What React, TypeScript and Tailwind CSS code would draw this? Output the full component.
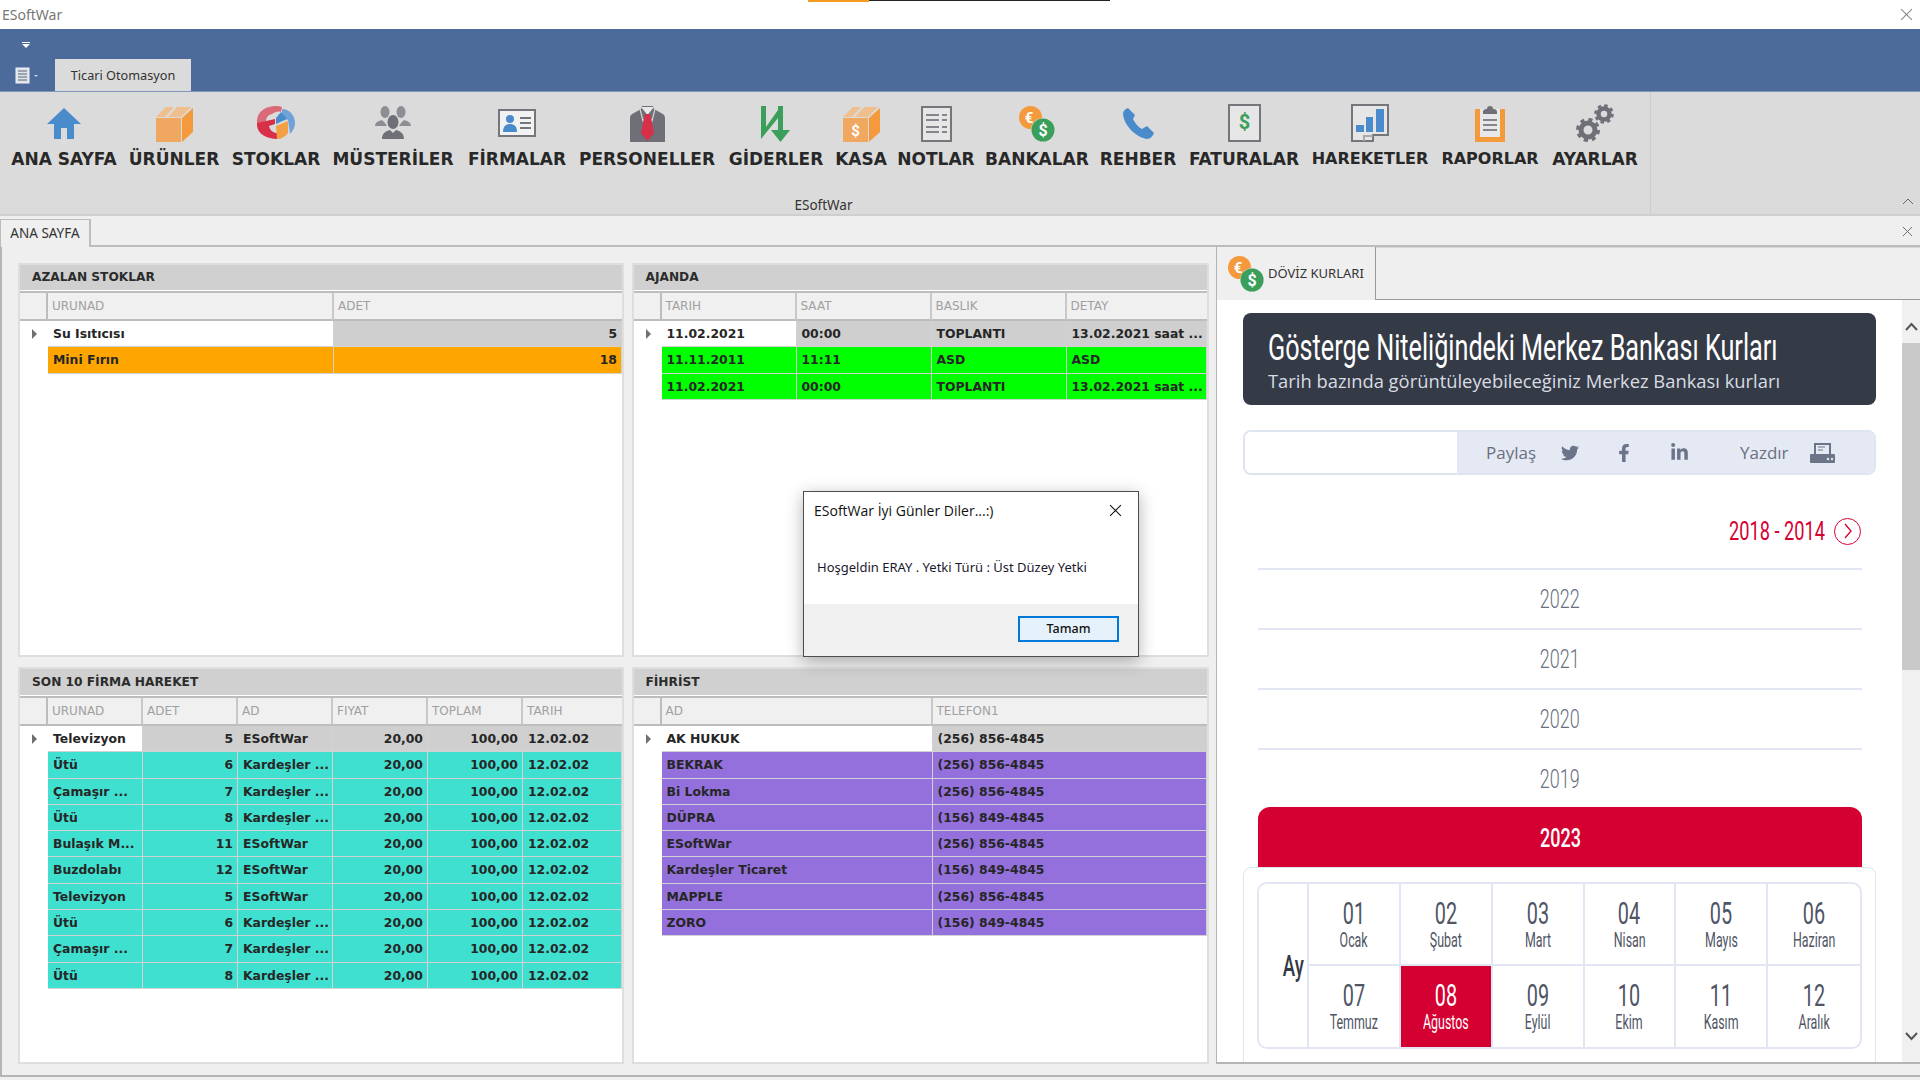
import React from "react";
import { FaTwitter, FaFacebookF, FaLinkedinIn } from "react-icons/fa";

const G = "#6f7077";
const Home = () => (
  <svg width="34" height="31" viewBox="0 0 34 31"><path d="M17 0L34 16H27V31H20V20H14V31H7V16H0Z" fill="#4a8bcb" /></svg>
);
const Box = ({ dollar }: { dollar?: boolean }) => (
  <svg width="37" height="36" viewBox="0 0 37 36">
    <path d="M0 12H25V36H0Z" fill="#f0a860" />
    <path d="M26 12L37 2V26L26 36Z" fill="#f49a3c" />
    <path d="M0 11L10 1H18L9 11Z" fill="#efc08e" />
    <path d="M12 11L21 1H35L25 11Z" fill="#efc08e" />
    {dollar && <text x="12.5" y="30" textAnchor="middle" fill="#fff" fontSize="15" fontWeight="700" fontFamily="Roboto, sans-serif">$</text>}
  </svg>
);
const Chart = () => (
  <svg width="38" height="33" viewBox="0 0 38 33">
    <path d="M0 14C1 5 9 0 19 0C21 0 23 0 25 1L24 6C21 5 18 6 15 8C11 9 9 12 9 15L0 18Z" fill="#db6a78" />
    <path d="M0 15V20C1 28 10 33 20 33V27C17 27 13 25 12 20L18 18V13L9 15L0 17Z" fill="#d9304a" />
    <path d="M19 20L31 15V27C28 31 24 33 20 33Z" fill="#f3a044" />
    <path d="M25 3C32 3 38 9 38 17C38 21 36 25 33 28L31 14L25 11Z" fill="#6fa3d8" />
    <path d="M19 12L24 6L30 13L19 18Z" fill="#4a8bcb" />
  </svg>
);
const People = () => (
  <svg width="36" height="33" viewBox="0 0 36 33">
    <ellipse cx="10" cy="6" rx="4.5" ry="6" fill="#8d8e94" />
    <ellipse cx="26" cy="6" rx="4.5" ry="6" fill="#8d8e94" />
    <path d="M0 20C0 16 4 15 7 14L10 17L12 20H0ZM36 20C36 16 32 15 29 14L26 17L24 20H36Z" fill="#8d8e94" />
    <ellipse cx="18" cy="16" rx="5.5" ry="7" fill={G} />
    <path d="M7 33C7 27 11 25 15 24L18 27L21 24C25 25 29 27 29 33Z" fill={G} />
  </svg>
);
const Card = () => (
  <svg width="38" height="28" viewBox="0 0 38 28">
    <rect x="1" y="1" width="36" height="26" fill="#f2f2f2" stroke="#75767c" strokeWidth="2" />
    <circle cx="12" cy="10" r="4" fill="#4a8bcb" />
    <path d="M5 23C5 17 8 15 12 15C16 15 19 17 19 23Z" fill="#4a8bcb" />
    <path d="M22 9H33M22 14H33M22 19H33" stroke="#75767c" strokeWidth="2" />
  </svg>
);
const Suit = () => (
  <svg width="35" height="36" viewBox="0 0 35 36">
    <path d="M0 12C0 9 2 8 4 7L11 3L12 0H23L24 3L31 7C33 8 35 9 35 12V36H0Z" fill={G} />
    <path d="M11 1H24L17.5 9Z" fill="#e8e8e8" />
    <path d="M10 3L13 15L17 9M25 3L22 15L18 9" stroke="#d5d5d5" strokeWidth="1.2" fill="none" />
    <path d="M15 8H20L21 12L24 27L17.5 35L11 27L14 12Z" fill="#d9304a" />
  </svg>
);
const Gider = () => (
  <svg width="30" height="36" viewBox="0 0 30 36">
    <path d="M0 33V0H5V21L17 4V0H22V24H29L19.5 36L10 24H17V12Z" fill="#3a9f5a" />
  </svg>
);
const Notes = () => (
  <svg width="31" height="36" viewBox="0 0 31 36">
    <rect x="1" y="1" width="29" height="34" fill="#e6e6e6" stroke="#75767c" strokeWidth="2" />
    <path d="M5 9H18M21 9H26M5 14H18M21 14H26M5 21H18M21 21H26M5 26H18M21 26H26" stroke="#85868c" strokeWidth="2" />
  </svg>
);
const Coins = ({ size = 36 }: { size?: number }) => (
  <svg width={size} height={size} viewBox="0 0 36 36">
    <circle cx="11.5" cy="11.5" r="11.5" fill="#f49a3c" />
    <text x="10" y="17" textAnchor="middle" fill="#fff" fontSize="15" fontWeight="700" fontFamily="Roboto, sans-serif">€</text>
    <circle cx="24" cy="24" r="12" fill="#dbdbdb" />
    <circle cx="24" cy="24" r="11.5" fill="#3a9f5a" />
    <text x="24" y="30" textAnchor="middle" fill="#fff" fontSize="16" fontWeight="700" fontFamily="Roboto, sans-serif">$</text>
  </svg>
);
const Phone = () => (
  <svg width="31" height="31" viewBox="0 0 31 31">
    <path d="M5 0C2 1 0 3 0 6C1 17 12 29 24 31C27 31 30 28 31 25L24 18L19 21C15 19 12 15 10 11L12 7Z" fill="#4a8bcb" />
  </svg>
);
const Invoice = () => (
  <svg width="33" height="38" viewBox="0 0 33 38">
    <rect x="1" y="1" width="31" height="36" fill="#e6e6e6" stroke="#75767c" strokeWidth="2" />
    <text x="16.5" y="25" textAnchor="middle" fill="#3a9f5a" fontSize="20" fontWeight="700" fontFamily="Roboto, sans-serif">$</text>
  </svg>
);
const Moves = () => (
  <svg width="38" height="38" viewBox="0 0 38 38">
    <path d="M1 37V1H37V31H22V37Z" fill="#e6e6e6" stroke="#75767c" strokeWidth="2" />
    <rect x="5" y="21" width="8" height="7" fill="#4a8bcb" />
    <rect x="15" y="13" width="7" height="15" fill="#4a8bcb" />
    <rect x="25" y="5" width="8" height="23" fill="#4a8bcb" />
    <path d="M13 37V32H22" stroke="#a8a8a8" strokeWidth="2" fill="none" />
  </svg>
);
const Clip = () => (
  <svg width="30" height="36" viewBox="0 0 30 36">
    <rect x="0" y="3" width="30" height="33" fill="#f49a3c" />
    <rect x="5" y="3" width="20" height="28" fill="#e8e8e8" />
    <path d="M8 6C8 3 11 3 12 3C12 1 13 0 15 0C17 0 18 1 18 3C19 3 22 3 22 6V8H8Z" fill={G} />
    <path d="M8 14H22M8 19H22M8 24H22" stroke="#85868c" strokeWidth="2" />
  </svg>
);
const Gears = () => (
  <svg width="38" height="38" viewBox="0 0 38 38">
    <g fill="none" stroke={G}>
      <circle cx="12" cy="26" r="7" strokeWidth="5" />
      <circle cx="12" cy="26" r="10.5" strokeWidth="3" strokeDasharray="4.2 4.05" />
      <circle cx="28" cy="10" r="5.5" strokeWidth="4.5" />
      <circle cx="28" cy="10" r="8.5" strokeWidth="2.6" strokeDasharray="3.4 3.28" />
    </g>
  </svg>
);
const X = ({ size, color, width = 1 }: { size: number; color: string; width?: number }) => (
  <svg width={size} height={size} viewBox="0 0 12 12"><path d="M1 1L11 11M11 1L1 11" stroke={color} strokeWidth={width} fill="none" /></svg>
);

const items: [string, string, React.ReactNode, string, string][] = [
  ["ANA SAYFA", "w-[120px]", <Home />, "pb-[3px]", "text-[17px]"],
  ["ÜRÜNLER", "w-[100px]", <Box />, "", "text-[17px]"],
  ["STOKLAR", "w-[104px]", <Chart />, "pb-[3px]", "text-[17px]"],
  ["MÜSTERİLER", "w-[130px]", <People />, "pb-[3px]", "text-[17px]"],
  ["FİRMALAR", "w-[118px]", <Card />, "pb-[5px]", "text-[17px]"],
  ["PERSONELLER", "w-[142px]", <Suit />, "", "text-[17px]"],
  ["GİDERLER", "w-[116px]", <Gider />, "", "text-[17px]"],
  ["KASA", "w-[54px]", <Box dollar />, "", "text-[17px]"],
  ["NOTLAR", "w-[96px]", <Notes />, "", "text-[17px]"],
  ["BANKALAR", "w-[106px]", <Coins />, "", "text-[17px]"],
  ["REHBER", "w-[96px]", <Phone />, "pb-[3px]", "text-[17px]"],
  ["FATURALAR", "w-[116px]", <Invoice />, "", "text-[17px]"],
  ["HAREKETLER", "w-[136px]", <Moves />, "", "text-[16px]"],
  ["RAPORLAR", "w-[104px]", <Clip />, "", "text-[16px]"],
  ["AYARLAR", "w-[106px]", <Gears />, "", "text-[17px]"],
];

type GridProps = {
  title: string;
  height: string;
  titleH: string;
  cols: string;
  headers: string[];
  rows: string[][];
  right: number[];
  color: string;
};

function DataPanel({ title, height, titleH, cols, headers, rows, right, color }: GridProps) {
  return (
    <section className={`${height} border-2 border-[#dedede] bg-white flex flex-col`}>
      <h2 className={`${titleH} shrink-0 bg-[#d0d0d0] pl-[12px] text-[12.2px] flex items-center font-bold text-[#2c2c2c]`}>{title}</h2>
      <div className="h-[30px] shrink-0 border-t-2 border-b-2 mt-[1px] border-[#bdbdbd] bg-[#f0f0f0] flex">
        <div className="w-[28px] shrink-0 border-r-2 border-[#bdbdbd]" />
        <div className={`flex-1 grid ${cols}`}>
          {headers.map((h) => (
            <div key={h} className="border-r-2 last:border-r-0 border-[#c8c8c8] pl-[4px] text-[12px] leading-[27px] text-[#a0a0a0] whitespace-nowrap">{h}</div>
          ))}
        </div>
      </div>
      {rows.map((row, r) => (
        <div key={r} className="h-[26.3px] flex shrink-0">
          <div className="w-[28px] shrink-0 flex items-center justify-center pl-[1px]">
            {r === 0 && <span className="block w-0 h-0 border-y-[5px] border-y-transparent border-l-[5px] border-l-[#707070]" />}
          </div>
          <div className={`flex-1 grid ${cols}`}>
            {row.map((cell, c) => {
              const bg = r === 0 ? (c === 0 ? "bg-white" : "bg-[#cfcfcf]") : color;
              return (
                <div
                  key={c}
                  className={`${bg} ${right.includes(c) ? "text-right pr-[4px]" : "pl-[5px]"} border-r border-b border-[#d2d2d2] text-[12.4px] leading-[26px] font-bold text-[#262626] whitespace-nowrap overflow-hidden`}
                >
                  {cell}
                </div>
              );
            })}
          </div>
        </div>
      ))}
    </section>
  );
}

const firmaRows = [
  ["Televizyon", "5", "ESoftWar", "20,00", "100,00", "12.02.02"],
  ["Ütü", "6", "Kardeşler ...", "20,00", "100,00", "12.02.02"],
  ["Çamaşır ...", "7", "Kardeşler ...", "20,00", "100,00", "12.02.02"],
  ["Ütü", "8", "Kardeşler ...", "20,00", "100,00", "12.02.02"],
  ["Bulaşık M...", "11", "ESoftWar", "20,00", "100,00", "12.02.02"],
  ["Buzdolabı", "12", "ESoftWar", "20,00", "100,00", "12.02.02"],
  ["Televizyon", "5", "ESoftWar", "20,00", "100,00", "12.02.02"],
  ["Ütü", "6", "Kardeşler ...", "20,00", "100,00", "12.02.02"],
  ["Çamaşır ...", "7", "Kardeşler ...", "20,00", "100,00", "12.02.02"],
  ["Ütü", "8", "Kardeşler ...", "20,00", "100,00", "12.02.02"],
];
const fihristRows = [
  ["AK HUKUK", "(256) 856-4845"],
  ["BEKRAK", "(256) 856-4845"],
  ["Bi Lokma", "(256) 856-4845"],
  ["DÜPRA", "(156) 849-4845"],
  ["ESoftWar", "(256) 856-4845"],
  ["Kardeşler Ticaret", "(156) 849-4845"],
  ["MAPPLE", "(256) 856-4845"],
  ["ZORO", "(156) 849-4845"],
];
const months = [
  ["01", "Ocak"], ["02", "Şubat"], ["03", "Mart"], ["04", "Nisan"], ["05", "Mayıs"], ["06", "Haziran"],
  ["07", "Temmuz"], ["08", "Ağustos"], ["09", "Eylül"], ["10", "Ekim"], ["11", "Kasım"], ["12", "Aralık"],
];

export default function App() {
  return (
    <div className="relative w-[1920px] h-[1080px] overflow-hidden bg-[#efefef] [font-family:'Noto_Sans',sans-serif]">
      {/* title bar */}
      <header className="relative h-[29px] bg-white flex items-center justify-between pl-[2px] pr-[7px] text-[14px] text-[#777]">
        <span>ESoftWar</span>
        <X size={13} color="#8a8a8a" />
        <div className="absolute top-0 left-[808px] w-[61px] h-[2px] bg-[#f39c1f]" />
        <div className="absolute top-0 left-[869px] w-[241px] h-[1px] bg-[#222]" />
      </header>

      {/* blue bar */}
      <div className="h-[62px] bg-[#4c6b9a] flex flex-col">
        <div className="h-[30px] pl-[22px] pt-[13px]">
          <div className="w-[8px] h-[1px] bg-white" />
          <div className="mt-[1px] w-0 h-0 border-x-[4px] border-x-transparent border-t-[4px] border-t-white" />
        </div>
        <div className="flex items-end flex-1">
          <div className="w-[55px] pl-[15px] pb-[7px] flex items-center gap-[3px]">
            <svg width="16" height="17" viewBox="0 0 16 17">
              <rect x="1" y="1" width="13" height="15" fill="#dfe3ea" stroke="#eef0f4" />
              <path d="M3 4H12M3 7H12M3 10H12M3 13H12" stroke="#5d6470" strokeWidth="1" />
            </svg>
            <span className="w-0 h-0 border-x-[2px] border-x-transparent border-t-[2px] border-t-[#cdd6e4]" />
          </div>
          <div className="w-[136px] h-[32px] bg-[#dbdbdb] text-center text-[12.7px] leading-[32px] text-[#333]">Ticari Otomasyon</div>
        </div>
      </div>

      {/* ribbon */}
      <div className="h-[125px] bg-[#dbdbdb] border-t border-[#7f97bb] border-b-2 border-b-[#cfcfcf] flex [font-family:'DejaVu_Sans',sans-serif]">
        <div className="w-[1651px] shrink-0 border-r border-[#cccccc] flex flex-col">
          <div className="flex pl-[4px] pt-[12px]">
            {items.map(([label, w, icon, pad, size]) => (
              <div key={label} className={`${w} h-[65px] shrink-0 flex flex-col items-center`}>
                <div className={`${pad} h-[38px] shrink-0 flex items-end justify-center`}>{icon}</div>
                <div className={`${size} mt-[7px] h-[20px] shrink-0 leading-[20px] font-bold text-[#282828] whitespace-nowrap`}>{label}</div>
              </div>
            ))}
          </div>
          <div className="mt-auto h-[24px] text-center text-[13.5px] leading-[30px] text-[#333] [font-family:'Noto_Sans',sans-serif] pr-[3px]">ESoftWar</div>
        </div>
        <div className="flex-1 flex items-end justify-end pr-[6px] pb-[9px]">
          <svg width="12" height="7" viewBox="0 0 12 7"><path d="M1 6L6 1L11 6" stroke="#666" fill="none" /></svg>
        </div>
      </div>

      {/* document tab strip */}
      <div className="h-[31px] border-b-2 border-[#bcbcbc] flex items-end justify-between pr-[7px]">
        <div className="w-[91px] h-[28px] -mb-[2px] bg-[#efefef] border-t border-r-2 border-l border-[#bcbcbc] text-center text-[13.5px] leading-[26px] text-[#333]">ANA SAYFA</div>
        <div className="pb-[8px]"><X size={11} color="#666" /></div>
      </div>

      {/* body */}
      <div className="h-[830px] border-l-2 border-b-2 border-[#b5b5b5] flex items-start">
        <div className="w-[1214px] shrink-0 pl-[16px] pt-[16px] grid grid-cols-[606px_577px] gap-x-[7.5px] gap-y-[10px] [font-family:'DejaVu_Sans',sans-serif]">
          <DataPanel
            title="AZALAN STOKLAR"
            height="h-[394px]"
            titleH="h-[25px]"
            cols="grid-cols-[286px_1fr]"
            headers={["URUNAD", "ADET"]}
            rows={[["Su Isıtıcısı", "5"], ["Mini Fırın", "18"]]}
            right={[1]}
            color="bg-[#ffa500]"
          />
          <DataPanel
            title="AJANDA"
            height="h-[394px]"
            titleH="h-[25px]"
            cols="grid-cols-[135px_135px_135px_1fr]"
            headers={["TARIH", "SAAT", "BASLIK", "DETAY"]}
            rows={[
              ["11.02.2021", "00:00", "TOPLANTI", "13.02.2021 saat ..."],
              ["11.11.2011", "11:11", "ASD", "ASD"],
              ["11.02.2021", "00:00", "TOPLANTI", "13.02.2021 saat ..."],
            ]}
            right={[]}
            color="bg-[#00ff00]"
          />
          <DataPanel
            title="SON 10 FİRMA HAREKET"
            height="h-[397px]"
            titleH="h-[26px]"
            cols="grid-cols-[95px_95px_95px_95px_95px_1fr]"
            headers={["URUNAD", "ADET", "AD", "FIYAT", "TOPLAM", "TARIH"]}
            rows={firmaRows}
            right={[1, 3, 4]}
            color="bg-[#40e0d0]"
          />
          <DataPanel
            title="FİHRİST"
            height="h-[397px]"
            titleH="h-[26px]"
            cols="grid-cols-[271px_1fr]"
            headers={["AD", "TELEFON1"]}
            rows={fihristRows}
            right={[]}
            color="bg-[#9370db]"
          />
        </div>

        {/* web panel */}
        <div className="flex-1 h-[817px] border-l border-b-2 border-[#b5b5b5] flex flex-col overflow-hidden">
          <div className="h-[53px] shrink-0 flex">
            <div className="w-[159px] pl-[11px] flex items-center gap-[4px] border-r border-[#9a9a9a]">
              <Coins size={36} />
              <span className="text-[13px] text-[#333] whitespace-nowrap">DÖVİZ KURLARI</span>
            </div>
            <div className="flex-1 border-b border-[#9a9a9a] border-t border-t-[#d8d8d8]" />
          </div>
          <div className="flex-1 flex min-h-0">
            <div className="flex-1 bg-white overflow-hidden [font-family:'Roboto',sans-serif]">
              <div className="ml-[26px] mt-[13px] w-[633px] h-[92px] rounded-[8px] bg-[#343a46] pl-[25px] pt-[15px]">
                <div className="origin-left scale-x-[0.7] text-[36px] leading-[41px] text-white whitespace-nowrap">Gösterge Niteliğindeki Merkez Bankası Kurları</div>
                <div className="text-[18px] leading-[24px] text-[#d8dce3] whitespace-nowrap [font-family:'Open_Sans',sans-serif] origin-left scale-x-[1.02]">Tarih bazında görüntüleyebileceğiniz Merkez Bankası kurları</div>
              </div>
              <div className="ml-[26px] mt-[25px] w-[633px] h-[45px] rounded-[8px] border-2 border-[#dfe5f0] flex overflow-hidden [font-family:'Open_Sans',sans-serif]">
                <div className="w-[212px] bg-white" />
                <div className="flex-1 bg-[#e4e9f4] flex items-center text-[#6a7080] text-[17px]">
                  <span className="ml-[29px] w-[55px]">Paylaş</span>
                  <FaTwitter className="ml-[20px] text-[#6b7488]" size={18} />
                  <FaFacebookF className="ml-[36px] text-[#6b7488]" size={18} />
                  <FaLinkedinIn className="ml-[37px] text-[#6b7488]" size={19} />
                  <span className="ml-[51px] w-[51px]">Yazdır</span>
                  <svg className="ml-[19px]" width="25" height="20" viewBox="0 0 25 20">
                    <path d="M4 0H21V11H4Z" fill="#6b7488" />
                    <path d="M6 2H19V11H6Z" fill="#e4e9f4" />
                    <path d="M8 4H15M8 7H13" stroke="#6b7488" />
                    <path d="M1 11H24C25 11 25 12 25 13V19C25 20 24 20 24 20H1C0 20 0 19 0 19V13C0 12 0 11 1 11Z" fill="#6b7488" />
                    <circle cx="18" cy="16" r="1.2" fill="#e4e9f4" />
                    <circle cx="22" cy="16" r="1.2" fill="#e4e9f4" />
                  </svg>
                </div>
              </div>
              <div className="mt-[40px] h-[32px] mr-[41px] flex items-center justify-end gap-[9px] text-[#d50032]">
                <span className="origin-right scale-x-[0.7] text-[26px] whitespace-nowrap">2018 - 2014</span>
                <span className="w-[27px] h-[27px] rounded-full border border-[#d50032] flex items-center justify-center">
                  <svg width="10" height="16" viewBox="0 0 10 16"><path d="M2 1L8 8L2 15" stroke="#d50032" strokeWidth="1.3" fill="none" /></svg>
                </span>
              </div>
              <div className="mt-[21px] ml-[41px] w-[604px]">
                {["2022", "2021", "2020", "2019"].map((y, i) => (
                  <div key={y} className={`${i === 3 ? "h-[59px]" : "h-[60px]"} border-t-2 border-[#e1e6f2] flex items-center justify-center pt-[2px] text-[25px] font-light text-[#6a7080]`}>
                    <span className="scale-x-[0.72]">{y}</span>
                  </div>
                ))}
                <div className="h-[60px] rounded-t-[12px] bg-[#d50032] flex items-center justify-center text-[25px] font-medium text-white pt-[4px]">
                  <span className="scale-x-[0.72]">2023</span>
                </div>
              </div>
              <div className="ml-[26px] w-[633px] h-[300px] rounded-t-[8px] border border-[#dfe5f0] px-[13px] pt-[14px]">
                <div className="h-[167px] rounded-[10px] border-2 border-[#e1e6f2] grid grid-cols-[50px_repeat(6,1fr)] grid-rows-2 overflow-hidden">
                  <div className="row-span-2 border-r-2 border-[#e1e6f2] flex items-center justify-end pr-[3px] text-[30px] font-medium text-[#343a46]">
                    <span className="origin-right scale-x-[0.62]">Ay</span>
                  </div>
                  {months.map(([n, m], i) => {
                    const active = n === "08";
                    return (
                      <div
                        key={n}
                        className={`${active ? "bg-[#d50032] text-white" : "text-[#4f5565]"} ${i < 6 ? "border-b-2" : ""} ${i % 6 < 5 ? "border-r-2" : ""} border-[#e1e6f2] flex flex-col items-center pt-[12px]`}
                      >
                        <span className="h-[34px] text-[32px] leading-[34px] scale-x-[0.62]">{n}</span>
                        <span className="h-[20px] text-[20px] leading-[20px] scale-x-[0.62] whitespace-nowrap">{m}</span>
                      </div>
                    );
                  })}
                </div>
              </div>
            </div>
            <div className="w-[18px] shrink-0 bg-[#f0f0f0] flex flex-col items-center">
              <div className="h-[43px] flex items-end pb-[12px]">
                <svg width="13" height="9" viewBox="0 0 13 9"><path d="M1 8L6.5 2L12 8" stroke="#555" strokeWidth="2" fill="none" /></svg>
              </div>
              <div className="w-full h-[327px] bg-[#c9c9c9]" />
              <div className="mt-auto pb-[21px]">
                <svg width="13" height="9" viewBox="0 0 13 9"><path d="M1 1L6.5 7L12 1" stroke="#555" strokeWidth="2" fill="none" /></svg>
              </div>
            </div>
          </div>
        </div>
      </div>

      {/* dialog */}
      <div className="absolute left-[803px] top-[491px] w-[336px] h-[166px] bg-white border border-[#4d4d4d] shadow-[0_4px_16px_rgba(0,0,0,0.3)] flex flex-col">
        <div className="h-[36px] flex items-center justify-between pl-[10px] pr-[16px] text-[#111]">
          <span className="[font-family:'Open_Sans',sans-serif] text-[14px]">ESoftWar İyi Günler Diler...:)</span>
          <X size={13} color="#111" />
        </div>
        <div className="flex-1 pl-[13px] pt-[30px] text-[13px] text-[#1a1a2e]">Hoşgeldin ERAY . Yetki Türü : Üst Düzey Yetki</div>
        <div className="h-[52px] bg-[#f0f0f0] flex justify-end items-start pt-[12px] pr-[19px]">
          <button className="w-[101px] h-[26px] bg-[#e5f1fb] border-2 border-[#0078d7] text-[12.5px] font-medium text-[#111]">Tamam</button>
        </div>
      </div>
    </div>
  );
}
